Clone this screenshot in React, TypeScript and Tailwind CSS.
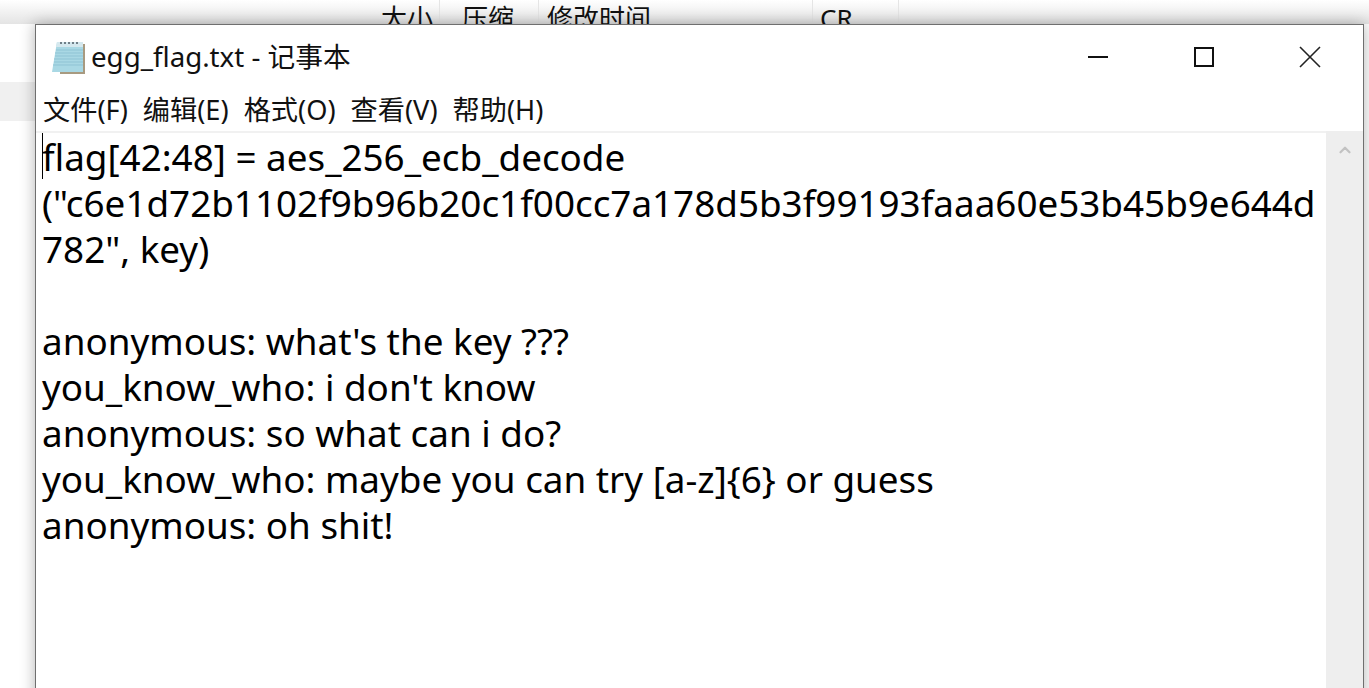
import { ChevronUp } from "lucide-react";

const columns = [
  { label: "大小", width: "w-[70px]", pad: "pl-[11px]" },
  { label: "压缩", width: "w-[99px]", pad: "pl-[22px]" },
  { label: "修改时间", width: "w-[274px]", pad: "pl-[8px]" },
  { label: "CR", width: "w-[86px]", pad: "pl-[7px]" },
];

const menus = ["文件(F)", "编辑(E)", "格式(O)", "查看(V)", "帮助(H)"];

const lines = [
  "flag[42:48] = aes_256_ecb_decode",
  '("c6e1d72b1102f9b96b20c1f00cc7a178d5b3f99193faaa60e53b45b9e644d',
  '782", key)',
  "\u00a0",
  "anonymous: what's the key ???",
  "you_know_who: i don't know",
  "anonymous: so what can i do?",
  "you_know_who: maybe you can try [a-z]{6} or guess",
  "anonymous: oh shit!",
];

function NotepadIcon() {
  return (
    <svg width="36" height="36" viewBox="0 0 36 36" className="shrink-0">
      <path d="M10 35h25V5h-3v27H10z" fill="#a89a80" />
      <path d="M7 3h26v30H2z" fill="#a9d8e4" />
      <path d="M7 3h26v5H6z" fill="#d5e8ee" />
      <path d="M6 11h27M5 14h28M5 17h28M4 20h29M4 23h29M3 26h30" stroke="#8fc3d4" strokeWidth="1" />
      <path d="M10 4h2M14 4h2M18 4h2M22 4h2M26 4h2" stroke="#6f7f88" strokeWidth="2" />
    </svg>
  );
}

export default function App() {
  return (
    <div className="relative h-[688px] w-[1369px] overflow-hidden bg-white font-['Noto_Sans','Noto_Sans_CJK_SC',sans-serif] text-black">
      <div className="flex h-[24px] bg-gradient-to-b from-white to-[#e4e4e4] pl-[370px]">
        {columns.map((c) => (
          <div key={c.label} className={`h-[40px] border-r border-[#e5e5e5] pt-[0px] text-[26px] leading-[36px] text-[#111] ${c.width} ${c.pad}`}>
            {c.label}
          </div>
        ))}
      </div>
      <div className="mt-[58px] h-[39px] w-[35px] bg-[#f0f0f0]" />

      <div className="absolute left-[35px] top-[24px] flex h-[680px] w-[1329px] flex-col border border-[#6f6f6f] bg-white shadow-[0_0_14px_rgba(0,0,0,0.3)]">
        <div className="flex h-[66px] items-center pb-[2px] pl-[14px]">
          <NotepadIcon />
          <span className="ml-[5px] text-[27.7px] leading-none text-[#111]">egg_flag.txt - 记事本</span>
          <div className="mb-[1px] ml-auto flex items-center">
            <svg width="22" height="22" viewBox="0 0 22 22" className="mr-[84px]">
              <path d="M1 11h20" stroke="#111" strokeWidth="2" />
            </svg>
            <svg width="22" height="22" viewBox="0 0 22 22" className="mr-[84px]">
              <rect x="2" y="2" width="18" height="18" fill="none" stroke="#111" strokeWidth="2" />
            </svg>
            <svg width="22" height="22" viewBox="0 0 22 22" className="mr-[42px]">
              <path d="M1 1l20 20M21 1L1 21" stroke="#222" strokeWidth="1.6" />
            </svg>
          </div>
        </div>
        <div className="flex h-[42px] gap-[15px] border-b-2 border-[#f1f1f1] pl-[7px] text-[27.2px] leading-[38px] text-[#111]">
          {menus.map((m) => (
            <span key={m}>{m}</span>
          ))}
        </div>
        <div className="flex min-h-0 flex-1">
          <div className="relative flex-1 pl-[6px] pt-[1px] text-[36.85px] leading-[46px] whitespace-pre">
            <div className="absolute left-[6px] top-0 h-[46px] w-px bg-black" />
            {lines.map((l, i) => (
              <div key={i}>{l}</div>
            ))}
          </div>
          <div className="-mt-[2px] flex w-[37px] shrink-0 justify-center bg-[#eeeeee] pt-[10px]">
            <ChevronUp size={18} strokeWidth={3} className="text-[#c2c2c2]" />
          </div>
        </div>
      </div>
    </div>
  );
}
